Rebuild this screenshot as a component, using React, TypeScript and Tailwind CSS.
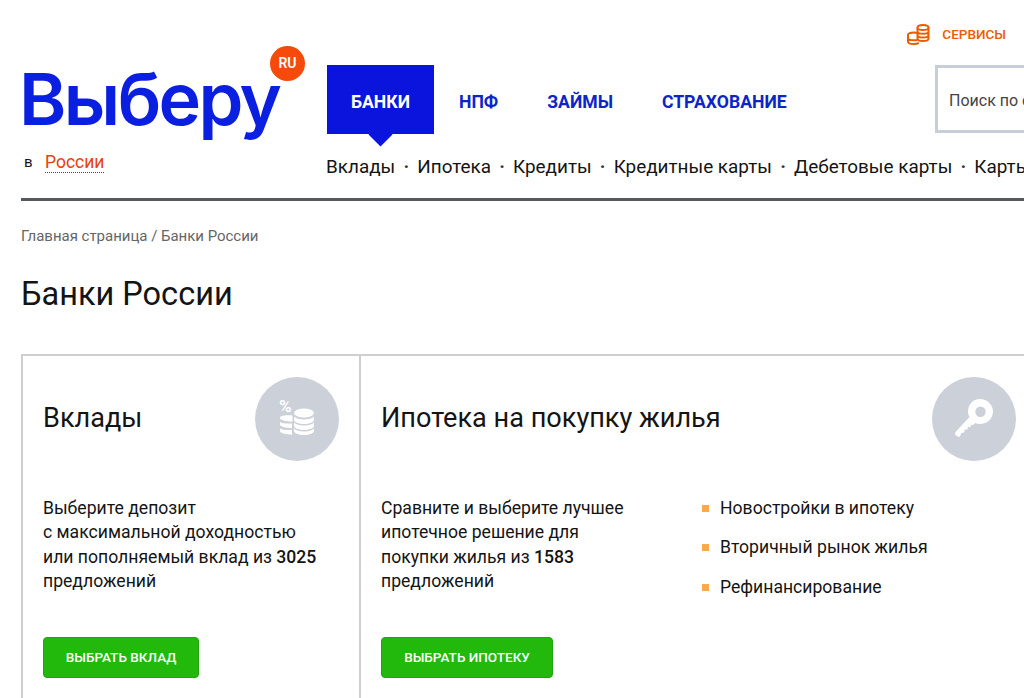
import { ReactNode } from "react";

const subLinks = ["Вклады", "Ипотека", "Кредиты", "Кредитные карты", "Дебетовые карты", "Карты"];
const mortgageLinks = ["Новостройки в ипотеку", "Вторичный рынок жилья", "Рефинансирование"];

function CoinsIcon() {
  return (
    <svg width="24" height="21" viewBox="0 0 24 21" fill="none" stroke="#f05a00" strokeWidth="2">
      <ellipse cx="17" cy="3.5" rx="5.5" ry="2.5" />
      <path d="M11.5 3.5v11c0 1.4 2.5 2.5 5.500 2.500s5.500-1.100 5.500-2.500v-11M11.500 7.200c0 1.400 2.500 2.500 5.500 2.500s5.500-1.100 5.500-2.500M11.500 11c0 1.400 2.500 2.500 5.500 2.500s5.500-1.100 5.500-2.500" />
      <path d="M11 9c-.8-.3-1.800-.5-3-.5-3.300 0-6 1.100-6 2.500v6.500C2 18.900 4.700 20 8 20c2 0 3.800-.4 4.800-1.100M2 13.800c0 1.400 2.700 2.500 6 2.500 1.200 0 2.400-.2 3.300-.4" />
    </svg>
  );
}

function PercentCoins() {
  return (
    <svg width="36" height="42" viewBox="0 0 36 42" fill="#fff">
      <text x="0" y="14" fontFamily="Roboto, sans-serif" fontSize="17" fontWeight="700">%</text>
      <g transform="translate(0 -4)">
        <ellipse cx="25" cy="19" rx="10" ry="4.500" />
        <path d="M15 22.500c1.500 2 5.500 3 10 3s8.500-1 10-3v3.500c0 2-4.500 4-10 4s-10-2-10-4zM15 28.500c1.500 2 5.500 3 10 3s8.500-1 10-3V32c0 2-4.500 4-10 4s-10-2-10-4zM15 34.500c1.500 2 5.500 3 10 3s8.500-1 10-3v2.500c0 2-4.500 4-10 4s-10-2-10-4z" />
      </g>
      <g transform="translate(0 -3)">
        <path d="M13.500 20.500v6.200C7 26.500 1 25.200 1 23v-.5c0-1.800 5-3 12.500-2zM13 28.500v4.800c-6-.2-12-1.500-12-3.700V27c2 1.500 7 1.800 12 1.500zM13 35v4.700c-6-.2-12-1.500-12-3.700v-2.500c2 1.300 7 1.800 12 1.500z" />
      </g>
    </svg>
  );
}

function KeyIcon() {
  return (
    <svg width="40" height="40" viewBox="0 0 40 40" fill="#fff">
      <path
        fillRule="evenodd"
        d="M26 0c7 0 13 5.500 13 12.500S33 25 26 25c-1.800 0-3.400-.3-4.800-1l-2.200 2.200-1.500-.7-1.300 2.800-2.200-.5-.8 3-2.500-.2-.5 3-2.700.3-1.700 3.600-1.500.5L1 35.500l.5-2.500L15.500 18c-1-1.700-1.500-3.500-1.500-5.500C14 5.500 19 0 26 0zm.5 7.500a5.200 5.200 0 1 0 0 10.400 5.200 5.200 0 0 0 0-10.400z"
      />
    </svg>
  );
}

function Card({ width, children }: { width: string; children: ReactNode }) {
  return <div className={`${width} shrink-0 relative h-[360px]`}>{children}</div>;
}

export default function App() {
  return (
    <div
      className="w-[1024px] h-[698px] overflow-hidden bg-white text-[#141414]"
      style={{ fontFamily: "Roboto, 'Noto Sans', sans-serif" }}
    >
      <header className="flex h-[201px] ml-[21px] border-b-[3px] border-[#55585c]">
        <div className="w-[306px] shrink-0 relative">
          <div
            className="absolute left-[-2px] top-[44px] text-[72px] leading-[110px] font-semibold tracking-[-2.600px] text-[#0a1fe0]"
            style={{ fontFamily: "Inter, sans-serif" }}
          >
            Выберу
          </div>
          <div className="absolute left-[249px] top-[46px] w-[35px] h-[35px] rounded-full bg-[#f54a0a] text-white text-[14px] font-semibold flex items-center justify-center">
            RU
          </div>
          <div className="absolute left-[3px] top-[151px] flex items-center text-[17.500px] leading-[22px]">
            <span className="text-[15px] w-[21px]">в</span>
            <span className="text-[#e8400c] border-b border-dotted border-[#444] leading-[20px]">России</span>
          </div>
        </div>
        <div className="w-[800px] shrink-0">
          <div className="h-[65px] w-[679px] flex justify-end items-center">
            <div className="flex items-center gap-[12px] pt-[4px]">
              <CoinsIcon />
              <span className="text-[13.500px] font-medium text-[#f05a00]">СЕРВИСЫ</span>
            </div>
          </div>
          <div className="flex items-start">
            <nav className="flex items-start w-[608px] shrink-0">
              <a className="relative w-[107px] h-[69px] pt-[5px] bg-[#0a14dc] text-white text-[17.600px] font-bold flex items-center justify-center">
                БАНКИ
                <span className="absolute left-[45px] top-[61px] w-[17px] h-[17px] rotate-45 bg-[#0a14dc]" />
              </a>
              {["НПФ", "ЗАЙМЫ", "СТРАХОВАНИЕ"].map((item, i) => (
                <a
                  key={item}
                  className={`h-[69px] pt-[5px] flex items-center text-[17.600px] font-bold text-[#0d25c8] ${
                    i === 0 ? "ml-[25px]" : "ml-[49px]"
                  }`}
                >
                  {item}
                </a>
              ))}
            </nav>
            <div className="w-[240px] h-[68px] shrink-0 border-[3px] border-[#c8ced8] flex items-center pl-[11px] pt-[3px] text-[16px] text-[#444] whitespace-nowrap">
              Поиск по сайту
            </div>
          </div>
          <div className="flex items-center mt-[21px] -ml-px text-[18.900px] leading-[24px] whitespace-nowrap">
            {subLinks.map((link, i) => (
              <span key={link} className="flex items-center">
                {i > 0 && <span className="w-[22px] text-center font-bold text-[#333]">·</span>}
                <a>{link}</a>
              </span>
            ))}
          </div>
        </div>
      </header>

      <main className="ml-[21px]">
        <div className="pt-[26px] text-[15px] leading-[18px] tracking-[-0.020px] text-[#666]">Главная страница / Банки России</div>
        <h1 className="mt-[28px] text-[32.500px] leading-[42px] font-normal">Банки России</h1>

        <div className="mt-[39px] flex w-[1200px] border-t-2 border-l-2 border-[#cfcfcf]">
          <Card width="w-[338px] border-r-2 border-[#cfcfcf]">
            <h2 className="pl-[20px] pt-[46px] text-[27.100px] leading-[32px] font-normal">Вклады</h2>
            <div className="absolute left-[232px] top-[21px] w-[84px] h-[84px] rounded-full bg-[#cbd0d9] flex items-center justify-center">
              <PercentCoins />
            </div>
            <p className="pl-[20px] mt-[62px] text-[17.600px] leading-[24.400px]">
              Выберите депозит
              <br />с максимальной доходностью
              <br />
              или пополняемый вклад из <b className="font-medium">3025</b>
              <br />
              предложений
            </p>
            <a className="ml-[20px] mt-[43px] w-[156px] h-[41px] rounded-[4px] bg-[#22b80c] border border-[#1fa50d] text-white text-[13.500px] font-medium flex items-center justify-center">
              ВЫБРАТЬ ВКЛАД
            </a>
          </Card>
          <Card width="w-[700px]">
            <h2 className="pl-[20px] pt-[46px] text-[27.100px] leading-[32px] font-normal">Ипотека на покупку жилья</h2>
            <div className="absolute left-[571px] top-[21px] w-[84px] h-[84px] rounded-full bg-[#cbd0d9] flex items-center justify-center">
              <KeyIcon />
            </div>
            <div className="flex mt-[62px]">
              <div className="w-[341px] shrink-0">
                <p className="pl-[20px] text-[17.600px] leading-[24.400px]">
                  Сравните и выберите лучшее
                  <br />
                  ипотечное решение для
                  <br />
                  покупки жилья из <b className="font-medium">1583</b>
                  <br />
                  предложений
                </p>
                <a className="ml-[20px] mt-[43px] w-[172px] h-[41px] rounded-[4px] bg-[#22b80c] border border-[#1fa50d] text-white text-[13.500px] font-medium flex items-center justify-center">
                  ВЫБРАТЬ ИПОТЕКУ
                </a>
              </div>
              <ul className="flex flex-col gap-[15px] text-[17.600px] leading-[24.400px]">
                {mortgageLinks.map((link) => (
                  <li key={link} className="flex items-center">
                    <span className="w-[7px] h-[7px] bg-[#fba94b] mr-[11px]" />
                    {link}
                  </li>
                ))}
              </ul>
            </div>
          </Card>
        </div>
      </main>
    </div>
  );
}
